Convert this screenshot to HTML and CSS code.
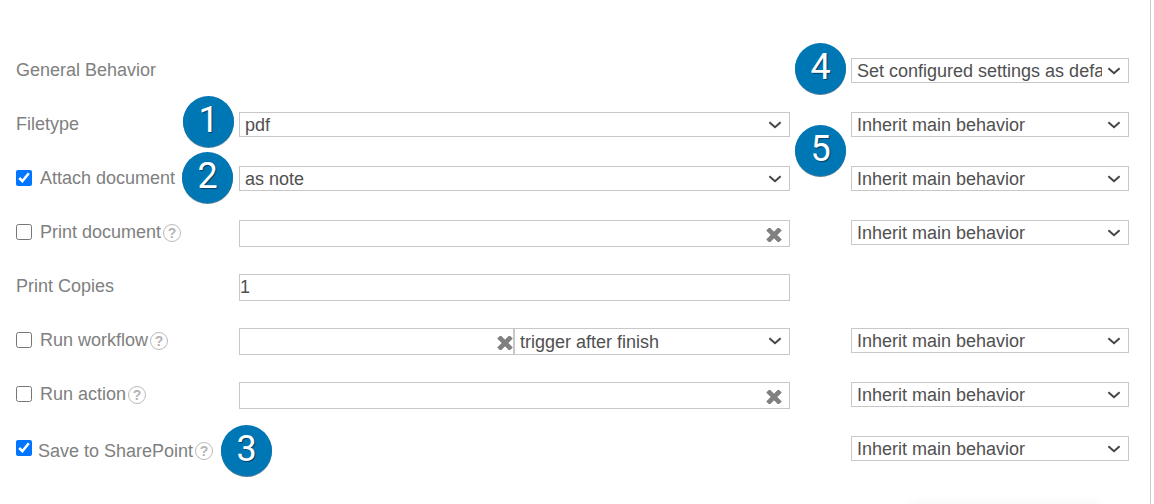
FILE: index.html
```html
<!DOCTYPE html>
<html lang="en">
<head>
<meta charset="utf-8">
<title>Document settings</title>
<link rel="stylesheet" href="styles.css">
</head>
<body>
<svg class="symbols" aria-hidden="true">
  <symbol id="chevron" viewBox="0 0 14 8"><path d="M1.4 1.2 7 6.2 12.6 1.2" fill="none" stroke="currentColor" stroke-width="2"/></symbol>
  <symbol id="cross" viewBox="0 0 16 14"><path d="M3.6 2.6 12.4 11.4M12.4 2.6 3.6 11.4" fill="none" stroke="currentColor" stroke-width="4.8" stroke-linecap="square" stroke-linejoin="round"/></symbol>
</svg>
<form class="panel">
  <div class="row">
    <div class="name"><span>General Behavior</span></div>
    <div class="behavior">
      <div class="pick"><select aria-label="General Behavior"><option>Set configured settings as default</option></select><svg class="chevron"><use href="#chevron"/></svg></div>
      <span class="badge badge-four">4</span>
    </div>
  </div>
  <div class="row">
    <div class="name"><label for="filetype">Filetype</label></div>
    <div class="field">
      <div class="pick"><select id="filetype"><option>pdf</option></select><svg class="chevron"><use href="#chevron"/></svg></div>
      <span class="badge badge-one">1</span>
    </div>
    <div class="behavior">
      <div class="pick"><select aria-label="Filetype behavior"><option>Inherit main behavior</option></select><svg class="chevron"><use href="#chevron"/></svg></div>
      <span class="badge badge-five">5</span>
    </div>
  </div>
  <div class="row">
    <div class="name"><input type="checkbox" id="attach" checked><label for="attach">Attach document</label></div>
    <div class="field">
      <div class="pick"><select aria-label="Attach document as"><option>as note</option></select><svg class="chevron"><use href="#chevron"/></svg></div>
      <span class="badge badge-two">2</span>
    </div>
    <div class="behavior">
      <div class="pick"><select aria-label="Attach behavior"><option>Inherit main behavior</option></select><svg class="chevron"><use href="#chevron"/></svg></div>
    </div>
  </div>
  <div class="row">
    <div class="name"><input type="checkbox" id="print"><label for="print">Print document</label><button type="button" class="help">?</button></div>
    <div class="field">
      <div class="entry"><input type="text" aria-label="Printer"><button type="button" class="clear" aria-label="Clear"><svg><use href="#cross"/></svg></button></div>
    </div>
    <div class="behavior">
      <div class="pick"><select aria-label="Print behavior"><option>Inherit main behavior</option></select><svg class="chevron"><use href="#chevron"/></svg></div>
    </div>
  </div>
  <div class="row">
    <div class="name"><label for="copies">Print Copies</label></div>
    <div class="field"><div class="entry"><input type="text" id="copies" value="1"></div></div>
  </div>
  <div class="row">
    <div class="name"><input type="checkbox" id="workflow"><label for="workflow">Run workflow</label><button type="button" class="help">?</button></div>
    <div class="field split">
      <div class="entry entry-tight"><input type="text" aria-label="Workflow"><button type="button" class="clear" aria-label="Clear"><svg><use href="#cross"/></svg></button></div>
      <div class="pick pick-tall"><select aria-label="Workflow trigger"><option>trigger after finish</option></select><svg class="chevron"><use href="#chevron"/></svg></div>
    </div>
    <div class="behavior">
      <div class="pick"><select aria-label="Workflow behavior"><option>Inherit main behavior</option></select><svg class="chevron"><use href="#chevron"/></svg></div>
    </div>
  </div>
  <div class="row">
    <div class="name"><input type="checkbox" id="action"><label for="action">Run action</label><button type="button" class="help">?</button></div>
    <div class="field">
      <div class="entry"><input type="text" aria-label="Action"><button type="button" class="clear" aria-label="Clear"><svg><use href="#cross"/></svg></button></div>
    </div>
    <div class="behavior">
      <div class="pick"><select aria-label="Action behavior"><option>Inherit main behavior</option></select><svg class="chevron"><use href="#chevron"/></svg></div>
    </div>
  </div>
  <div class="row">
    <div class="name name-low"><input type="checkbox" id="sharepoint" checked><label for="sharepoint">Save to SharePoint</label><button type="button" class="help">?</button></div>
    <div class="field"><span class="badge badge-three">3</span></div>
    <div class="behavior">
      <div class="pick"><select aria-label="SharePoint behavior"><option>Inherit main behavior</option></select><svg class="chevron"><use href="#chevron"/></svg></div>
    </div>
  </div>
</form>
</body>
</html>
```
FILE: styles.css
```css
* { box-sizing: border-box; }

body {
  margin: 0;
  background: #fff;
  color: #808080;
  font: 18px/24px "Liberation Sans", Arial, sans-serif;
}

.symbols { position: absolute; width: 0; height: 0; }

.panel {
  position: relative;
  min-height: 100vh;
  margin-right: 3px;
  padding: 43px 21px 0 16px;
  border-right: 1px solid #ccc;
  overflow: hidden;
}

/* soft shadow of the floating bar below the form */
.panel::after {
  content: "";
  position: absolute;
  right: 50px;
  bottom: -12px;
  width: 190px;
  height: 10px;
  border-radius: 8px;
  box-shadow: 0 0 14px rgba(0, 0, 0, 0.08);
}

.row {
  display: grid;
  grid-template-columns: 223px minmax(0, 551fr) 61px minmax(0, 278fr);
  align-items: start;
  height: 54px;
  padding-top: 15px;
}

.name { display: flex; align-items: flex-start; white-space: nowrap; }
.field { grid-column: 2; position: relative; }
.behavior { grid-column: 4; position: relative; }
.split { display: grid; grid-template-columns: 275fr 276fr; }

input[type="checkbox"] {
  width: 16px;
  height: 16px;
  margin: 4px 8px 0 0;
  accent-color: #0075ff;
}

.help {
  width: 18px;
  height: 18px;
  margin: 4px 0 0 2px;
  padding: 0;
  border: 1px solid #bbb;
  border-radius: 50%;
  background: none;
  color: #b4b4b4;
  font: bold 14px/16px "Liberation Sans", Arial, sans-serif;
}

.name-low label { margin-top: 3px; }
.name-low input[type="checkbox"] { margin-right: 6px; }
.name-low .help { margin-top: 6px; }

.pick, .entry { position: relative; }

select, input[type="text"] {
  display: block;
  width: 100%;
  margin: 0;
  border: 1px solid #c8c8c8;
  border-radius: 0;
  background: #fff;
  color: #505050;
  font: inherit;
}

select {
  appearance: none;
  height: 25px;
  padding: 0 26px 0 5px;
}

.pick-tall select { height: 27px; }

input[type="text"] { height: 27px; padding: 0 28px 0 0; }

.chevron {
  position: absolute;
  top: 9px;
  right: 8px;
  width: 14px;
  height: 8px;
  color: #444;
  pointer-events: none;
}

.clear {
  position: absolute;
  top: 8px;
  right: 8px;
  width: 16px;
  height: 14px;
  padding: 0;
  border: 0;
  background: none;
  color: #808080;
}

.clear svg { display: block; width: 16px; height: 14px; }
.entry-tight .clear { right: 1px; }

/* numbered callouts laid over the form */
.badge {
  position: absolute;
  width: 51px;
  height: 51px;
  border-radius: 50%;
  background: #0077b5;
  box-shadow: 0 1px 0 #557f98;
  color: #fff;
  font-family: Roboto, "Liberation Sans", sans-serif;
  font-size: 36px;
  line-height: 48px;
  text-align: center;
  text-shadow: 1px 1px 1px #00406a;
}

.badge-one { top: -16px; left: -56px; }
.badge-two { top: -14px; left: -57px; }
.badge-three { top: -11px; left: -18px; }
.badge-four { top: -15px; left: -56px; }
.badge-five { top: 13px; left: -56px; }
```
